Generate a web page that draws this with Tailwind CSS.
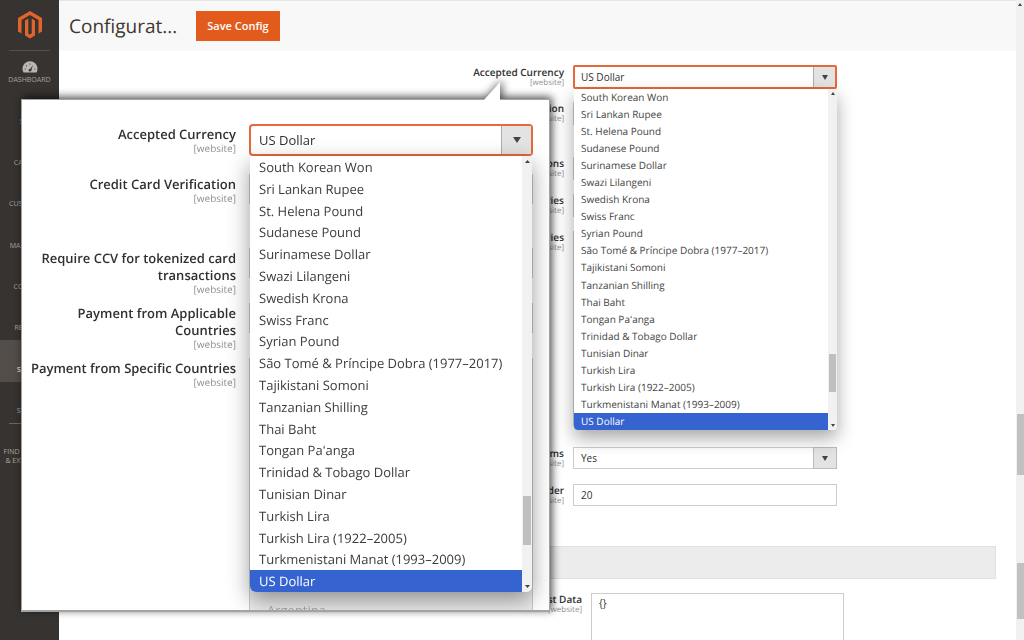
<!DOCTYPE html>
<html lang="en">
<head>
  <meta charset="UTF-8" />
  <meta name="viewport" content="width=device-width, initial-scale=1.0"/>
  <title>Configuration</title>
  <script src="https://cdn.jsdelivr.net/npm/@tailwindcss/browser@4"></script>
</head>
<body class="relative flex h-screen overflow-hidden bg-white font-['Open_Sans',sans-serif] text-[#303030] [text-rendering:geometricPrecision]">

  <!-- sidebar -->
  <nav class="flex w-[59px] shrink-0 flex-col bg-[#373330] text-center text-[7px] leading-[9px] text-[#aaa6a0]">
    <a href="#" aria-label="Home" class="mx-[9px] flex h-[51px] items-center justify-center border-b border-[#55504b]">
      <svg class="h-7 w-6" viewBox="0 0 24 28" fill="#e3632c">
        <path d="M12 0 L24 7 V20.500 L20.500 22.500 V9 L12 4 L3.500 9 V22.500 L0 20.500 V7 Z"/>
        <path d="M7 9.500 L10.300 7.600 V22.500 L12 23.600 L13.700 22.500 V7.600 L17 9.500 V24.600 L12 27.500 L7 24.600 Z"/>
      </svg>
    </a>
    <ul class="flex h-[372px] flex-col">
      <li class="flex-1"><a href="#" class="flex h-full flex-col items-center justify-end gap-[3px] pb-[7px]">
        <svg class="h-3 w-4" viewBox="0 0 16 12"><path d="M1.500 12 A7.500 7.500 0 1 1 14.500 12 Z" transform="translate(0 -.5)" fill="#bab6b1"/><path d="M7 9.500 L11 4 L9 10 Z" fill="#373330"/><circle cx="8" cy="9.300" r="1.300" fill="#373330"/><g fill="#373330"><circle cx="3.200" cy="8" r=".6"/><circle cx="4.500" cy="4.800" r=".6"/><circle cx="8" cy="3" r=".6"/><circle cx="12.800" cy="8" r=".6"/></g></svg>
        DASHBOARD</a></li>
      <li class="flex-1"><a href="#" class="flex h-full items-end justify-center pb-[7px]">SALES</a></li>
      <li class="flex-1"><a href="#" class="flex h-full items-end justify-center pb-[7px]">CATALOG</a></li>
      <li class="flex-1"><a href="#" class="flex h-full items-end justify-center pb-[7px]">CUSTOMERS</a></li>
      <li class="flex-1"><a href="#" class="flex h-full items-end justify-center pb-[7px]">MARKETING</a></li>
      <li class="flex-1"><a href="#" class="flex h-full items-end justify-center pb-[7px]">CONTENT</a></li>
      <li class="flex-1"><a href="#" class="flex h-full items-end justify-center pb-[7px]">REPORTS</a></li>
      <li class="flex-1 bg-[#524d49] text-white"><a href="#" class="flex h-full items-end justify-center pb-[7px]">STORES</a></li>
      <li class="flex-1"><a href="#" class="flex h-full items-end justify-center pb-[7px]">SYSTEM</a></li>
    </ul>
    <a href="#" class="mx-[9px] flex justify-center border-t border-[#6b6660] pt-6 whitespace-nowrap">FIND PARTNERS<br/>&amp; EXTENSIONS</a>
  </nav>

  <main class="min-w-0 flex-1">
    <header class="flex h-[51px] items-center gap-[19px] border-t border-[#e6e6e6] bg-[#f8f8f8] pl-[10px]">
      <h1 class="text-[19px] text-[#41362f]">Configurat...</h1>
      <button class="h-[30px] bg-[#e35b1c] px-[11px] text-[11px] font-semibold text-white">Save Config</button>
    </header>

    <form class="pt-[15px] text-[10px]">
      <div class="grid grid-cols-[505px_264px] gap-x-[9px] text-right leading-[11px]">
        <div class="h-9"><label for="currency" class="block pt-px font-semibold">Accepted Currency</label><span class="block text-[8px] leading-[9px] text-[#909090]">[website]</span></div>
        <div class="relative z-10 h-9">
          <select id="currency" class="-mt-px block h-6 w-full appearance-none rounded-xs border-2 border-[#e5693a] bg-white px-[6px] text-[10px]"><option>US Dollar</option></select>
          <span class="pointer-events-none absolute top-px right-[2px] flex h-5 w-[22px] items-center justify-center border-l border-[#adadad] bg-[#e3e3e3]"><svg class="h-[5px] w-[6px]" viewBox="0 0 6 5"><path d="M0 0H6L3 5Z" fill="#444"/></svg></span>
          <div class="absolute top-[23px] right-0 left-px flex h-[341px] overflow-hidden rounded-b bg-white text-left text-[10px] leading-[17px] text-[#444] shadow-[0_8px_18px_rgba(0,0,0,0.35)]">
            <ul role="listbox" data-list class="flex flex-1 flex-col [&>li]:min-h-0 [&>li]:flex-1 [&>li]:pl-[7px]"></ul>
            <div class="flex w-[9px] flex-col items-center bg-[#f1f1f1] py-[3px]">
              <svg class="h-[3px] w-1" viewBox="0 0 4 3"><path d="M0 3H4L2 0Z" fill="#444"/></svg>
              <div class="mt-[259px] h-[38px] w-[7px] bg-[#bfbfbf]"></div>
              <svg class="mt-auto h-[3px] w-1" viewBox="0 0 4 3"><path d="M0 0H4L2 3Z" fill="#444"/></svg>
            </div>
          </div>
        </div>

        <div class="h-[55px]"><label for="verify" class="block pt-px font-semibold">Credit Card Verification</label><span class="block text-[8px] leading-[9px] text-[#909090]">[website]</span></div>
        <div><select id="verify" class="h-[23px] w-full appearance-none border border-[#ccc] px-[7px]"></select></div>

        <div class="h-[37px]"><label for="ccv" class="block pt-px font-semibold">Require CCV for tokenized card transactions</label><span class="block text-[8px] leading-[9px] text-[#909090]">[website]</span></div>
        <div><select id="ccv" class="h-[23px] w-full appearance-none border border-[#ccc] px-[7px]"></select></div>

        <div class="h-[37px]"><label for="applicable" class="block pt-px font-semibold">Payment from Applicable Countries</label><span class="block text-[8px] leading-[9px] text-[#909090]">[website]</span></div>
        <div><select id="applicable" class="h-[23px] w-full appearance-none border border-[#ccc] px-[7px]"></select></div>

        <div class="h-[216px]"><label for="specific" class="block pt-px font-semibold">Payment from Specific Countries</label><span class="block text-[8px] leading-[9px] text-[#909090]">[website]</span></div>
        <div><select id="specific" multiple class="h-[195px] w-full appearance-none border border-[#ccc] bg-[#e9e9e9]"></select></div>

        <div class="h-[37px]"><label for="items" class="block pt-px font-semibold">Enable Line Items</label><span class="block text-[8px] leading-[9px] text-[#909090]">[website]</span></div>
        <div class="relative">
          <select id="items" class="block h-[22px] w-full appearance-none border border-[#ccc] px-[7px] text-[10px]"><option>Yes</option></select>
          <span class="pointer-events-none absolute top-0 right-0 flex h-[22px] w-6 items-center justify-center border border-[#bbb] bg-[#e3e3e3]"><svg class="h-[5px] w-[6px]" viewBox="0 0 6 5"><path d="M0 0H6L3 5Z" fill="#444"/></svg></span>
        </div>

        <div class="h-[62px]"><label for="order" class="block pt-px font-semibold">Sort Order</label><span class="block text-[8px] leading-[9px] text-[#909090]">[website]</span></div>
        <div><input id="order" type="text" value="20" class="block h-[22px] w-full border border-[#ccc] px-[7px]"/></div>
      </div>

      <div class="mr-5 ml-[33px] h-[33px] border border-[#e0e0e0] bg-[#ececec]"></div>

      <div class="mt-[14px] grid grid-cols-[523px_253px] gap-x-[9px] text-right leading-[11px]">
        <div><label for="data" class="block pt-px font-semibold">Request Data</label><span class="block text-[8px] leading-[9px] text-[#909090]">[website]</span></div>
        <textarea id="data" class="block h-[47px] w-full resize-none border border-b-0 border-[#ccc] px-[7px] py-1">{}</textarea>
      </div>
    </form>
  </main>

  <!-- page scrollbar -->
  <div class="flex w-2 shrink-0 flex-col items-center bg-[#f1f1f1] pt-[3px]">
    <svg class="h-[3px] w-1" viewBox="0 0 4 3"><path d="M0 3H4L2 0Z" fill="#444"/></svg>
    <div class="mt-[408px] h-[61px] w-[7px] bg-[#c1c1c1]"></div>
    <div class="mt-[88px] h-[56px] w-[7px] bg-[#c1c1c1]"></div>
  </div>

  <!-- enlarged callout -->
  <section class="absolute top-[99px] left-[21px] z-20 w-[529px] drop-shadow-[2px_-2px_4px_rgba(0,0,0,0.7)]">
    <svg class="absolute -top-[18px] left-[462px] h-5 w-[18px]" viewBox="0 0 18 20"><path d="M0 20 L17 1 V20 Z" fill="#fff"/></svg>
    <div class="h-[513px] overflow-hidden border border-b-2 border-[#a3a3a3] bg-white pt-6 text-[13px] leading-[17px]">
      <div class="grid grid-cols-[214px_284px] gap-x-[13px] gap-y-[9px] text-right">
        <div class="h-[41px] pt-[2px]"><label for="currency2" class="block font-semibold">Accepted Currency</label><span class="block text-[10px] leading-[10px] text-[#909090]">[website]</span></div>
        <div class="relative z-10 h-[41px]">
          <select id="currency2" class="block h-8 w-full appearance-none rounded-sm border-2 border-[#e5693a] bg-white px-2 text-[13px]"><option>US Dollar</option></select>
          <span class="pointer-events-none absolute top-[2px] right-[2px] flex h-7 w-[30px] items-center justify-center border-l border-[#adadad] bg-[#e3e3e3]"><svg class="h-[6px] w-2" viewBox="0 0 8 6"><path d="M0 0H8L4 6Z" fill="#444"/></svg></span>
          <div class="absolute top-8 right-px left-px flex h-[436px] overflow-hidden rounded-b-md bg-white text-left leading-[22px] text-[#3c3c3c] shadow-[0_8px_22px_rgba(0,0,0,0.4)]">
            <ul role="listbox" data-list class="flex flex-1 flex-col [&>li]:min-h-0 [&>li]:flex-1 [&>li]:pl-[9px]"></ul>
            <div class="flex w-[10px] flex-col items-center bg-[#f1f1f1] py-1">
              <svg class="h-[3px] w-[5px]" viewBox="0 0 5 3"><path d="M0 3H5L2.500 0Z" fill="#444"/></svg>
              <div class="mt-[333px] h-[49px] w-2 bg-[#bfbfbf]"></div>
              <svg class="mt-auto h-[3px] w-[5px]" viewBox="0 0 5 3"><path d="M0 0H5L2.500 3Z" fill="#444"/></svg>
            </div>
          </div>
        </div>

        <div class="h-[65px] pt-[2px]"><label for="verify2" class="block font-semibold">Credit Card Verification</label><span class="block text-[10px] leading-[10px] text-[#909090]">[website]</span></div>
        <div><select id="verify2" class="h-[30px] w-full appearance-none border border-[#ccc]"></select></div>

        <div class="pt-[2px]"><label for="ccv2" class="block font-semibold">Require CCV for tokenized card transactions</label><span class="block text-[10px] leading-[10px] text-[#909090]">[website]</span></div>
        <div><select id="ccv2" class="h-[30px] w-full appearance-none border border-[#ccc]"></select></div>

        <div class="pt-[2px]"><label for="applicable2" class="block font-semibold">Payment from Applicable Countries</label><span class="block text-[10px] leading-[10px] text-[#909090]">[website]</span></div>
        <div><select id="applicable2" class="h-[30px] w-full appearance-none border border-[#ccc]"></select></div>

        <div class="pt-[2px]"><label for="specific2" class="block font-semibold">Payment from Specific Countries</label><span class="block text-[10px] leading-[10px] text-[#909090]">[website]</span></div>
        <select id="specific2" multiple class="h-[300px] w-full appearance-none border border-[#ccc] bg-[#ececec] pt-[242px] pl-[17px] text-left text-[#a8a8a8]"><option>Argentina</option></select>
      </div>
    </div>
  </section>

  <script>
    const currencies = [
      'South Korean Won', 'Sri Lankan Rupee', 'St. Helena Pound', 'Sudanese Pound',
      'Surinamese Dollar', 'Swazi Lilangeni', 'Swedish Krona', 'Swiss Franc',
      'Syrian Pound', 'São Tomé & Príncipe Dobra (1977–2017)', 'Tajikistani Somoni',
      'Tanzanian Shilling', 'Thai Baht', 'Tongan Paʻanga', 'Trinidad & Tobago Dollar',
      'Tunisian Dinar', 'Turkish Lira', 'Turkish Lira (1922–2005)',
      'Turkmenistani Manat (1993–2009)', 'US Dollar'
    ];

    document.querySelectorAll('[data-list]').forEach(list => {
      currencies.forEach(name => {
        const li = document.createElement('li');
        li.setAttribute('role', 'option');
        li.textContent = name;
        if (name === 'US Dollar') {
          li.className = 'bg-[#3563d0] text-white';
          li.setAttribute('aria-selected', 'true');
        }
        list.appendChild(li);
      });
    });
  </script>
</body>
</html>
